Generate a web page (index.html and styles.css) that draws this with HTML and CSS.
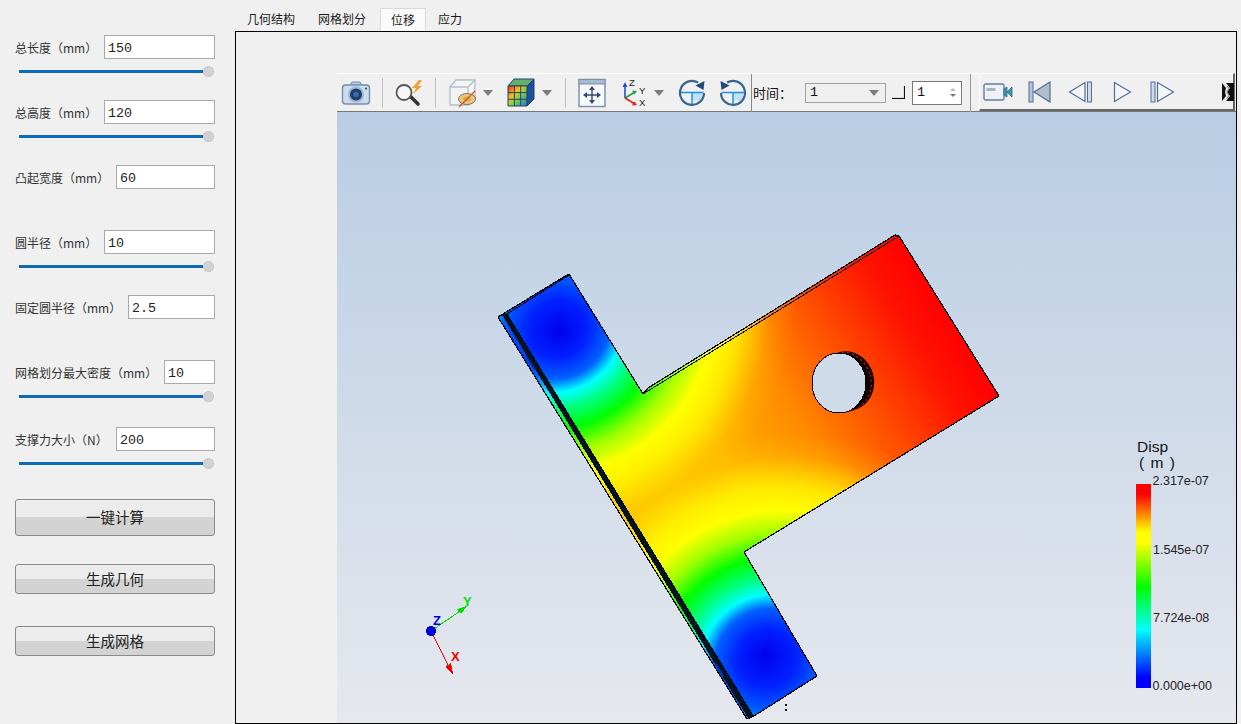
FILE: index.html
```html
<!DOCTYPE html>
<html lang="zh">
<head>
<meta charset="utf-8">
<title>位移</title>
<link rel="stylesheet" href="styles.css">
</head>
<body>
<aside class="panel">
  <div class="group">
    <div class="field"><label>总长度（mm）</label><input class="num w111" value="150"></div>
    <div class="slider"><span class="track"></span><span class="knob"></span></div>
  </div>
  <div class="group">
    <div class="field"><label>总高度（mm）</label><input class="num w111" value="120"></div>
    <div class="slider"><span class="track"></span><span class="knob"></span></div>
  </div>
  <div class="group">
    <div class="field"><label>凸起宽度（mm）</label><input class="num w99" value="60"></div>
  </div>
  <div class="group">
    <div class="field"><label>圆半径（mm）</label><input class="num w111" value="10"></div>
    <div class="slider"><span class="track"></span><span class="knob"></span></div>
  </div>
  <div class="group">
    <div class="field"><label>固定圆半径（mm）</label><input class="num w87" value="2.5"></div>
  </div>
  <div class="group tall">
    <div class="field"><label>网格划分最大密度（mm）</label><input class="num w51" value="10"></div>
    <div class="slider"><span class="track"></span><span class="knob"></span></div>
  </div>
  <div class="group last">
    <div class="field"><label>支撑力大小（N）</label><input class="num w99" value="200"></div>
    <div class="slider"><span class="track"></span><span class="knob"></span></div>
  </div>
  <button class="btn big">一键计算</button>
  <button class="btn">生成几何</button>
  <button class="btn">生成网格</button>
</aside>

<main class="main">
  <nav class="tabs">
    <span class="tab">几何结构</span>
    <span class="tab">网格划分</span>
    <span class="tab active">位移</span>
    <span class="tab">应力</span>
  </nav>
  <section class="frame">
    <div class="toolbar">
      <span class="tool first">
        <svg viewBox="0 0 30 30"><path d="M9 7l2-3h8l2 3" fill="#b9cbdf" stroke="#6f8fb3"/><rect x="1.5" y="7" width="27" height="19" rx="3" fill="#cfdcea" stroke="#6f8fb3" stroke-width="1.4"/><circle cx="15" cy="16.5" r="8" fill="#9db8d3"/><circle cx="15" cy="16.5" r="6" fill="#1e3c6e"/><circle cx="15" cy="16.5" r="2.8" fill="#3f6a9d"/><circle cx="25" cy="10.5" r="1" fill="#1e3c6e"/></svg>
      </span>
      <i class="sep"></i>
      <span class="tool">
        <svg viewBox="0 0 30 30"><path d="M17 19l7 7" stroke="#333" stroke-width="3.6" stroke-linecap="round"/><circle cx="10" cy="14.5" r="7.5" fill="#f7f7f7" stroke="#555" stroke-width="1.8"/><path d="M25 2l-7 8h4l-3 6 9-8h-4l4-6z" fill="#f0a030"/></svg>
      </span>
      <i class="sep"></i>
      <span class="tool">
        <svg viewBox="0 0 30 30"><path d="M3 9l6-7h19v18l-7 7H3z" fill="#f4f4f4" stroke="#b3bfcf" stroke-width="1.4"/><path d="M3 9h18v18M21 9l7-7" fill="none" stroke="#b3bfcf" stroke-width="1.4"/><ellipse cx="20" cy="21" rx="8.5" ry="5.5" fill="#e8c978" stroke="#777"/><ellipse cx="20" cy="21" rx="4" ry="2.4" fill="#d9a94c"/><path d="M12 29l16-16" stroke="#e0502a" stroke-width="1.3"/></svg>
      </span>
      <span class="drop"><i class="arrow"></i></span>
      <span class="tool after">
        <svg viewBox="0 0 30 30"><defs><linearGradient id="cubeFace" x1="0" y1="0" x2="1" y2="1"><stop offset="0" stop-color="#e82a18"/><stop offset=".35" stop-color="#f5c020"/><stop offset=".6" stop-color="#70cc50"/><stop offset="1" stop-color="#2a70d8"/></linearGradient></defs><path d="M2 8l6-7h20l-7 7z" fill="#62b070" stroke="#23426f"/><path d="M21 8l7-7v20l-7 7z" fill="#1c4f9c" stroke="#23426f"/><rect x="2" y="8" width="19" height="20" fill="url(#cubeFace)"/><path d="M2 8h19v20H2zM8.400 8v20M14.700 8v20M2 14.600h19M2 21.300h19" fill="none" stroke="#23426f"/></svg>
      </span>
      <span class="drop"><i class="arrow"></i></span>
      <i class="sep after"></i>
      <span class="tool">
        <svg viewBox="0 0 30 30"><rect x="2" y="1.5" width="26" height="27" fill="#f6f8fa" stroke="#7a8fa8" stroke-width="1.4"/><rect x="2" y="1.5" width="26" height="4.5" fill="#a9bbd0" stroke="#7a8fa8"/><path d="M15 10v14M8 17h14" stroke="#2c4a75" stroke-width="1.4"/><path d="M15 8l-3 4h6zM15 26l-3-4h6zM6 17l4-3v6zM24 17l-4-3v6z" fill="#2c4a75"/></svg>
      </span>
      <span class="tool wide-gap">
        <svg viewBox="0 0 30 30"><path d="M3 20V7" stroke="#1f4fd0" stroke-width="1.6"/><path d="M3 4l-2.5 5h5z" fill="#1f4fd0"/><path d="M3 20l10-6" stroke="#20a040" stroke-width="1.6"/><path d="M15 13l-5-.5 2.3 4z" fill="#20a040"/><path d="M3 20l10 6" stroke="#e02020" stroke-width="1.6"/><path d="M15 27l-5 .5 2.3-4z" fill="#e02020"/><text x="7" y="8" class="mini">Z</text><text x="17" y="16" class="mini">Y</text><text x="17" y="28" class="mini">X</text></svg>
      </span>
      <span class="drop slim"><i class="arrow"></i></span>
      <span class="tool rot">
        <svg viewBox="0 0 30 30"><rect x="14" y="14.5" width="10" height="8" fill="#bfe0f6"/><path d="M2.5 14.500h23M14 14.500v12" stroke="#1a90d8" stroke-width="1.4"/><path d="M20 4.500A12 12 0 1 0 26 15" fill="none" stroke="#3a6590" stroke-width="2.200"/><path d="M26.500 3L25.500 12L17.500 7.500z" fill="#1f4a7a"/></svg>
      </span>
      <span class="tool">
        <svg viewBox="0 0 30 30"><rect x="14" y="14.500" width="10" height="8" fill="#bfe0f6"/><path d="M2.500 14.500h23M14 14.500v12" stroke="#1a90d8" stroke-width="1.4"/><path d="M8 4.500A12 12 0 1 1 2 15" fill="none" stroke="#3a6590" stroke-width="2.200"/><path d="M1.500 3L2.500 12L10.500 7.500z" fill="#1f4a7a"/></svg>
      </span>
      <i class="sep tight"></i>
      <span class="time-label">时间：</span>
      <span class="combo"><span>1</span><i class="arrow"></i></span>
      <span class="corner"></span>
      <span class="spin"><span>1</span><span class="spin-arrows"><i class="up"></i><i class="down"></i></span></span>
      <i class="sep far"></i>
      <div class="player">
        <svg class="p-video" viewBox="0 0 30 18"><rect x="1" y="1" width="20" height="16" rx="1.500" fill="#eef2f7" stroke="#5f7fa8" stroke-width="1.400"/><rect x="3.500" y="5" width="9" height="3" fill="#a9b4c2"/><path d="M21 6l3-2v10l-3-2zM24 9l5-5v10z" fill="#2f9db0" stroke="#38607f" stroke-width=".8"/></svg>
        <svg class="p-first" viewBox="0 0 23 22"><rect x="1" y="1" width="4" height="20" fill="#b8c4d4" stroke="#4f6f97"/><path d="M22 1v20L6 11z" fill="#b3bcc8" stroke="#4f6f97" stroke-width="1.200"/></svg>
        <svg class="p-prev" viewBox="0 0 25 22"><path d="M17 1.500v19L1.500 11z" fill="#f3f5f8" stroke="#4f6f97" stroke-width="1.200"/><rect x="19.500" y="1" width="4" height="20" fill="#d3dbe6" stroke="#4f6f97"/></svg>
        <svg class="p-play" viewBox="0 0 19 22"><path d="M1.500 1.500v19L17.500 11z" fill="#f3f5f8" stroke="#4f6f97" stroke-width="1.200"/></svg>
        <svg class="p-next" viewBox="0 0 25 22"><rect x="1" y="1" width="4" height="20" fill="#d3dbe6" stroke="#4f6f97"/><path d="M7.500 1.500v19L23.500 11z" fill="#f3f5f8" stroke="#4f6f97" stroke-width="1.200"/></svg>
        <svg class="p-more" viewBox="0 0 12 18"><rect width="12" height="18" fill="#111"/><path d="M0 0h4l4 5-3 4 3 4-4 5H0l4-5-1-4 1-4z" fill="#e8e8e8"/><path d="M5 3l2 2.500-2 3.500 2 3.500-2 3" fill="none" stroke="#777"/></svg>
      </div>
    </div>

    <div class="viewport">
      <svg class="scene" viewBox="337 112 899 611" xmlns="http://www.w3.org/2000/svg">
        <defs>
          <linearGradient id="base" gradientUnits="userSpaceOnUse" x1="507" y1="313" x2="826" y2="116">
            <stop offset="0" stop-color="#ffb800"/>
            <stop offset=".3" stop-color="#ffb000"/>
            <stop offset=".52" stop-color="#ff8800"/>
            <stop offset=".72" stop-color="#ff4800"/>
            <stop offset=".88" stop-color="#ff1400"/>
            <stop offset="1" stop-color="#ff0000"/>
          </linearGradient>
          <radialGradient id="endA" gradientUnits="userSpaceOnUse" cx="544" cy="306.500" fx="560" fy="332" r="255" gradientTransform="translate(560 332) rotate(-31.7) scale(1.05 1) rotate(31.7) translate(-560 -332)">
            <stop offset="0" stop-color="#0000f0"/>
            <stop offset=".11" stop-color="#0020ff"/>
            <stop offset=".2" stop-color="#0060ff"/>
            <stop offset=".26" stop-color="#00ffff"/>
            <stop offset=".33" stop-color="#00ff80"/>
            <stop offset=".42" stop-color="#00ff00"/>
            <stop offset=".52" stop-color="#a0ff00"/>
            <stop offset=".62" stop-color="#ffff00"/>
            <stop offset=".72" stop-color="#ffff00" stop-opacity=".75"/>
            <stop offset=".85" stop-color="#ffff00" stop-opacity=".15"/>
            <stop offset=".95" stop-color="#ffff00" stop-opacity="0"/>
          </radialGradient>
          <radialGradient id="endB" gradientUnits="userSpaceOnUse" cx="781" cy="680.500" fx="765" fy="655" r="255" gradientTransform="translate(765 655) rotate(-31.7) scale(1.05 1) rotate(31.7) translate(-765 -655)">
            <stop offset="0" stop-color="#0000f0"/>
            <stop offset=".11" stop-color="#0020ff"/>
            <stop offset=".2" stop-color="#0060ff"/>
            <stop offset=".26" stop-color="#00ffff"/>
            <stop offset=".33" stop-color="#00ff80"/>
            <stop offset=".42" stop-color="#00ff00"/>
            <stop offset=".52" stop-color="#a0ff00"/>
            <stop offset=".62" stop-color="#ffff00"/>
            <stop offset=".72" stop-color="#ffff00" stop-opacity=".75"/>
            <stop offset=".85" stop-color="#ffff00" stop-opacity=".15"/>
            <stop offset=".95" stop-color="#ffff00" stop-opacity="0"/>
          </radialGradient>
          <linearGradient id="jet" x1="0" y1="0" x2="0" y2="1">
            <stop offset="0" stop-color="#ff0000"/>
            <stop offset=".05" stop-color="#ff0000"/>
            <stop offset=".235" stop-color="#ffff00"/>
            <stop offset=".29" stop-color="#ffff00"/>
            <stop offset=".505" stop-color="#00ff00"/>
            <stop offset=".715" stop-color="#00ffff"/>
            <stop offset=".95" stop-color="#0000ff"/>
            <stop offset="1" stop-color="#0000ff"/>
          </linearGradient>
          <clipPath id="sil">
            <polygon points="498,317 562,278 569,274 643,394 648,388 895,235 899,236 999,396 744,552 817,676 754,716 747,719"/>
          </clipPath>
        </defs>

        <g clip-path="url(#sil)">
          <rect x="490" y="230" width="520" height="495" fill="url(#base)"/>
          <rect x="490" y="230" width="520" height="495" fill="url(#endB)"/>
          <rect x="490" y="230" width="520" height="495" fill="url(#endA)"/>
        </g>
        <ellipse cx="847" cy="381" rx="27" ry="30" transform="rotate(-15 847 381)" fill="#120000"/>
        <ellipse cx="844" cy="382" rx="27" ry="30" transform="rotate(-15 844 382)" fill="none" stroke="#ff1a00" stroke-width="1" stroke-dasharray="2 3"/>
        <ellipse cx="839" cy="383" rx="27" ry="30" fill="#cfdbe8" stroke="#000" stroke-width="1" class="crisp"/>

        <polygon points="502,315 507,313 754,716 748,718" fill="#03121c" class="crisp"/>
        <path d="M526 356l9 14M716 664l7 12" stroke="#0a2ab0" stroke-width="2"/>
        <polygon points="498,317 562,278 569,274 643,394 648,388 895,235 899,236 999,396 744,552 817,676 754,716 747,719" fill="none" stroke="#000" stroke-width="1.200" class="crisp"/>
        <path d="M507 314L569 275M643 394L899 236" fill="none" stroke="#000" stroke-width="1" class="crisp"/>

        <rect x="785" y="704" width="2" height="2" fill="#111"/>
        <rect x="785" y="709" width="2" height="2" fill="#111"/>

        <g class="crisp">
          <path d="M431 631L463 609" stroke="#00e000" stroke-width="1"/>
          <path d="M431 631L451 671" stroke="#f00000" stroke-width="1"/>
          <polygon points="467,606 457,609 461,614" fill="#00e000"/>
          <polygon points="453,674 445,667 451,663" fill="#f00000"/>
          <circle cx="431" cy="631" r="5" fill="#0000e0"/>
        </g>
        <text x="433" y="625" class="axis az">Z</text>
        <text x="463" y="606" class="axis ay">Y</text>
        <text x="451" y="661" class="axis ax">X</text>

        <text x="1137" y="452" class="lg-title">Disp</text>
        <text x="1139" y="468" class="lg-title spread">( m )</text>
        <rect x="1136" y="484" width="15" height="204" fill="url(#jet)"/>
        <text x="1152.500" y="485" class="lg-val">2.317e-07</text>
        <text x="1153" y="554" class="lg-val">1.545e-07</text>
        <text x="1153" y="622" class="lg-val">7.724e-08</text>
        <text x="1152.500" y="690" class="lg-val">0.000e+00</text>
      </svg>
    </div>
  </section>
</main>
</body>
</html>
```

FILE: styles.css
```css
* { box-sizing: border-box; }
html, body { margin: 0; height: 100%; }
body {
  display: flex;
  width: 1241px;
  height: 724px;
  overflow: hidden;
  background: #f0f0f0;
  color: #1a1a1a;
  font-family: "Noto Sans CJK SC", "Liberation Sans", sans-serif;
  font-size: 12px;
}

/* left panel */
.panel {
  width: 235px;
  flex: none;
  padding: 35px 20px 0 15px;
  display: flex;
  flex-direction: column;
}
.group { height: 65px; }
.group.tall { height: 67px; }
.group.last { height: 72px; }
.field { display: flex; align-items: center; justify-content: space-between; height: 24px; }
.field label { white-space: nowrap; color: #333; letter-spacing: 0; }
.num {
  height: 24px;
  border: 1px solid #a9a9a9;
  background: #fff;
  padding: 2px 3px 0;
  font-family: "Liberation Mono", monospace;
  font-size: 13.33px;
  color: #222;
  outline: none;
  border-radius: 0;
}
.w111 { width: 111px; }
.w99 { width: 99px; }
.w87 { width: 87px; }
.w51 { width: 51px; }
.slider {
  display: flex;
  align-items: center;
  height: 11px;
  margin: 7px 1px 0 4px;
}
.track { flex: 1; height: 3px; background: #0e6ab8; }
.knob {
  width: 11px;
  height: 11px;
  flex: none;
  border-radius: 50%;
  background: #d2d2d2;
  border: 1px dotted #b8b8b8;
}
.btn {
  display: block;
  width: 200px;
  height: 30px;
  margin: 0 0 32px;
  padding: 0 0 2px;
  border: 1px solid #8a8a8a;
  border-radius: 3px;
  background: linear-gradient(#ececec 50%, #d3d3d3 50%);
  font-family: "Noto Sans CJK SC", sans-serif;
  font-size: 14.5px;
  color: #222;
}
.btn.big { height: 37px; margin-bottom: 28px; }

/* tabs and frame */
.main { flex: 1; display: flex; flex-direction: column; min-width: 0; padding-right: 4px; }
.tabs { height: 31px; display: flex; align-items: flex-end; }
.tab {
  height: 23px;
  line-height: 22px;
  padding: 0 12px;
  color: #1a1a1a;
}
.tabs .tab:first-child { padding-right: 11px; }
.tab.active {
  background: #fafafa;
  border: 1px solid #d9d9d9;
  border-bottom: 0;
  line-height: 21px;
  padding: 0 10px;
  margin-left: 2px;
}
.frame {
  flex: 1;
  min-height: 0;
  border: 1px solid #000;
  background: #f0f0f0;
  padding: 41px 0 0 101px;
  display: flex;
  flex-direction: column;
}

/* toolbar */
.toolbar {
  height: 39px;
  flex: none;
  display: flex;
  align-items: center;
  border-top: 1px solid #fff;
  border-bottom: 1px solid #777;
  font-family: "Noto Sans CJK SC", sans-serif;
}
.tool { width: 30px; height: 30px; flex: none; display: block; }
.tool svg { width: 30px; height: 30px; display: block; }
.tool.first { margin-left: 4px; }
.tool.after { margin-left: 7px; }
.tool.wide-gap { margin-left: 15px; }
.tool.rot { margin-left: 12px; margin-right: 11px; }
.sep { width: 1px; height: 30px; flex: none; margin: 0 11px; background: #c0c0c0; }
.sep.after { margin-left: 7px; }
.sep.tight { height: 38px; margin: 0 0 0 2px; background: #888; }
.sep.far { height: 38px; margin: 0 8px; background: #999; }
.drop { width: 22px; height: 30px; flex: none; display: flex; align-items: center; justify-content: center; }
.drop.slim { width: 14px; }
.arrow {
  display: block;
  width: 0;
  height: 0;
  border-left: 5.5px solid transparent;
  border-right: 5.5px solid transparent;
  border-top: 6px solid #7d7d7d;
}
.mini { font-family: "Liberation Sans", sans-serif; font-size: 9.5px; fill: #222; }
.time-label { width: 53px; padding-left: 1px; font-size: 13px; color: #111; flex: none; }
.combo {
  width: 81px;
  height: 20px;
  flex: none;
  border: 1px solid #a0a0a0;
  background: #efefef;
  display: flex;
  align-items: center;
  justify-content: space-between;
  padding: 0 6px 0 4px;
  font-family: "Liberation Mono", monospace;
  font-size: 13.33px;
  color: #111;
}
.corner {
  width: 13px;
  height: 13px;
  flex: none;
  margin: 0 7px 0 6px;
  border-right: 1px solid #111;
  border-bottom: 1px solid #111;
  box-shadow: inset -1px -1px 0 #ddd;
}
.spin {
  width: 50px;
  height: 24px;
  flex: none;
  border: 1px solid #777;
  background: #fff;
  display: flex;
  align-items: center;
  justify-content: space-between;
  padding: 0 5px 0 4px;
  font-family: "Liberation Mono", monospace;
  font-size: 13.33px;
  color: #111;
}
.spin-arrows { display: flex; flex-direction: column; gap: 3px; }
.up, .down { display: block; width: 0; height: 0; border-left: 3px solid transparent; border-right: 3px solid transparent; }
.up { border-bottom: 3px solid #bbb; }
.down { border-top: 3px solid #777; }
.player {
  height: 38px;
  width: 256px;
  flex: none;
  display: flex;
  align-items: center;
  border-top: 1px solid #fff;
  border-left: 1px solid #fff;
  border-right: 2px solid #666;
  border-bottom: 2px solid #666;
  margin-right: 2px;
  margin-top: -1px;
}
.player svg { display: block; flex: none; }
.p-video { width: 30px; height: 18px; margin-left: 3px; }
.p-first { width: 23px; height: 22px; margin-left: 15px; }
.p-prev { width: 25px; height: 22px; margin-left: 17px; }
.p-play { width: 19px; height: 22px; margin-left: 20px; }
.p-next { width: 25px; height: 22px; margin-left: 18px; }
.p-more { width: 12px; height: 18px; margin-left: 47px; }

/* 3D view */
.viewport {
  flex: 1;
  min-height: 0;
  background: linear-gradient(#b9cde4, #e6e8ee);
}
.scene { display: block; width: 100%; height: 100%; }
.crisp { shape-rendering: crispEdges; }
.axis { font-family: "Liberation Sans", sans-serif; font-size: 13px; font-weight: 700; }
.az { fill: #0000e0; }
.ay { fill: #00e000; }
.ax { fill: #f00000; }
.lg-title { font-family: "Liberation Sans", sans-serif; font-size: 15.5px; fill: #111; }
.spread { word-spacing: 2px; }
.lg-val { font-family: "Liberation Sans", sans-serif; font-size: 12.5px; fill: #222; }
```
